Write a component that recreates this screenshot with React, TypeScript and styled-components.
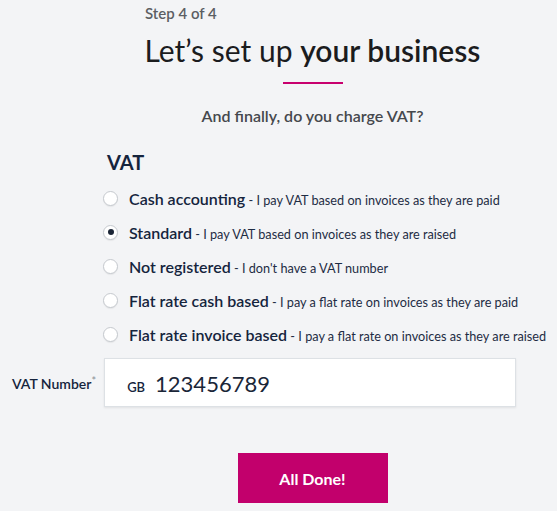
import React, { useState } from "react";
import styled, { createGlobalStyle } from "styled-components";

const GlobalStyle = createGlobalStyle`
  html, body {
    margin: 0;
    padding: 0;
    background: #f3f4f6;
  }
  body {
    font-family: Lato, "Open Sans", "Liberation Sans", sans-serif;
    -webkit-font-smoothing: antialiased;
  }
`;

const Page = styled.div`
  width: 557px;
  height: 511px;
  overflow: hidden;
  background: #f3f4f6;
`;

const Header = styled.div`
  display: flex;
  flex-direction: column;
  align-items: center;
  padding-left: 68px;
`;

const Step = styled.div`
  align-self: flex-start;
  margin-left: 77px;
  margin-top: 4px;
  font-size: 15px;
  font-weight: 600;
  color: #5b5e63;
  line-height: 18px;
`;

const Title = styled.h1`
  margin: 10px 0 0;
  font-size: 30px;
  font-weight: 400;
  color: #1b1c1e;
  line-height: 36px;

  strong {
    font-weight: 600;
  }
`;

const Rule = styled.div`
  width: 60px;
  height: 2px;
  margin-top: 14px;
  background: #c8006e;
`;

const Question = styled.p`
  margin: 22px 0 0;
  font-size: 16px;
  font-weight: 600;
  color: #45484d;
  line-height: 20px;
`;

const Section = styled.div`
  padding-left: 103px;
  margin-top: 24px;
`;

const SectionTitle = styled.h2`
  margin: 0 0 0 4px;
  font-size: 20px;
  font-weight: 700;
  color: #15243d;
  line-height: 24px;
`;

const Options = styled.div`
  display: flex;
  flex-direction: column;
  gap: 14px;
  margin-top: 14px;
`;

const Option = styled.label`
  display: flex;
  align-items: center;
  gap: 11px;
  height: 20px;
  cursor: pointer;
  white-space: nowrap;
`;

const Radio = styled.span<{ $checked: boolean }>`
  position: relative;
  width: 15px;
  height: 15px;
  flex: none;
  border-radius: 50%;
  background: #fff;
  border: 1px solid #c5c9ce;
  box-sizing: border-box;
  box-shadow: 0 1px 1px rgba(0, 0, 0, 0.06);

  &::after {
    content: "";
    display: ${(p) => (p.$checked ? "block" : "none")};
    position: absolute;
    left: 3.5px;
    top: 3.5px;
    width: 6px;
    height: 6px;
    border-radius: 50%;
    background: #1b2536;
  }
`;

const OptionName = styled.span`
  font-size: 16px;
  font-weight: 600;
  color: #15243d;
`;

const OptionNote = styled.span`
  font-size: 12.7px;
  font-weight: 400;
  color: #1e2c44;
`;

const FieldRow = styled.div`
  display: flex;
  align-items: center;
  gap: 8px;
  margin-top: 14px;
  padding-left: 12px;
`;

const FieldLabel = styled.div`
  font-size: 14px;
  font-weight: 600;
  color: #15243d;
  white-space: nowrap;

  sup {
    font-size: 11px;
    color: #8a8f96;
    vertical-align: 4px;
    font-weight: 400;
  }
`;

const InputBox = styled.div`
  display: flex;
  align-items: baseline;
  gap: 10px;
  width: 412px;
  height: 49px;
  box-sizing: border-box;
  padding: 11px 20px 0 22px;
  background: #fff;
  border: 1px solid #dde1e5;
  box-shadow: 0 1px 2px rgba(0, 0, 0, 0.08);
`;

const Prefix = styled.span`
  font-size: 13px;
  font-weight: 600;
  color: #15243d;
`;

const Value = styled.input`
  border: none;
  outline: none;
  padding: 0;
  width: 300px;
  font-family: inherit;
  font-size: 22px;
  color: #1a2638;
  background: transparent;
`;

const Footer = styled.div`
  display: flex;
  justify-content: center;
  padding-left: 68px;
  margin-top: 46px;
`;

const Button = styled.button`
  width: 150px;
  height: 50px;
  border: none;
  background: #c2006c;
  color: #fff;
  font-family: inherit;
  font-size: 16px;
  font-weight: 700;
  cursor: pointer;
`;

const OPTIONS = [
  { name: "Cash accounting", note: "I pay VAT based on invoices as they are paid" },
  { name: "Standard", note: "I pay VAT based on invoices as they are raised" },
  { name: "Not registered", note: "I don't have a VAT number" },
  { name: "Flat rate cash based", note: "I pay a flat rate on invoices as they are paid" },
  { name: "Flat rate invoice based", note: "I pay a flat rate on invoices as they are raised" },
];

export default function App() {
  const [selected, setSelected] = useState(1);
  const [vat, setVat] = useState("123456789");

  return (
    <Page>
      <GlobalStyle />
      <Header>
        <Step>Step 4 of 4</Step>
        <Title>
          Let’s set up <strong>your business</strong>
        </Title>
        <Rule />
        <Question>And finally, do you charge VAT?</Question>
      </Header>
      <Section>
        <SectionTitle>VAT</SectionTitle>
        <Options>
          {OPTIONS.map((o, i) => (
            <Option key={o.name} onClick={() => setSelected(i)}>
              <Radio $checked={selected === i} />
              <span>
                <OptionName>{o.name}</OptionName>
                <OptionNote> - {o.note}</OptionNote>
              </span>
            </Option>
          ))}
        </Options>
      </Section>
      <FieldRow>
        <FieldLabel>
          VAT Number<sup>*</sup>
        </FieldLabel>
        <InputBox>
          <Prefix>GB</Prefix>
          <Value value={vat} onChange={(e) => setVat(e.target.value)} />
        </InputBox>
      </FieldRow>
      <Footer>
        <Button>All Done!</Button>
      </Footer>
    </Page>
  );
}
